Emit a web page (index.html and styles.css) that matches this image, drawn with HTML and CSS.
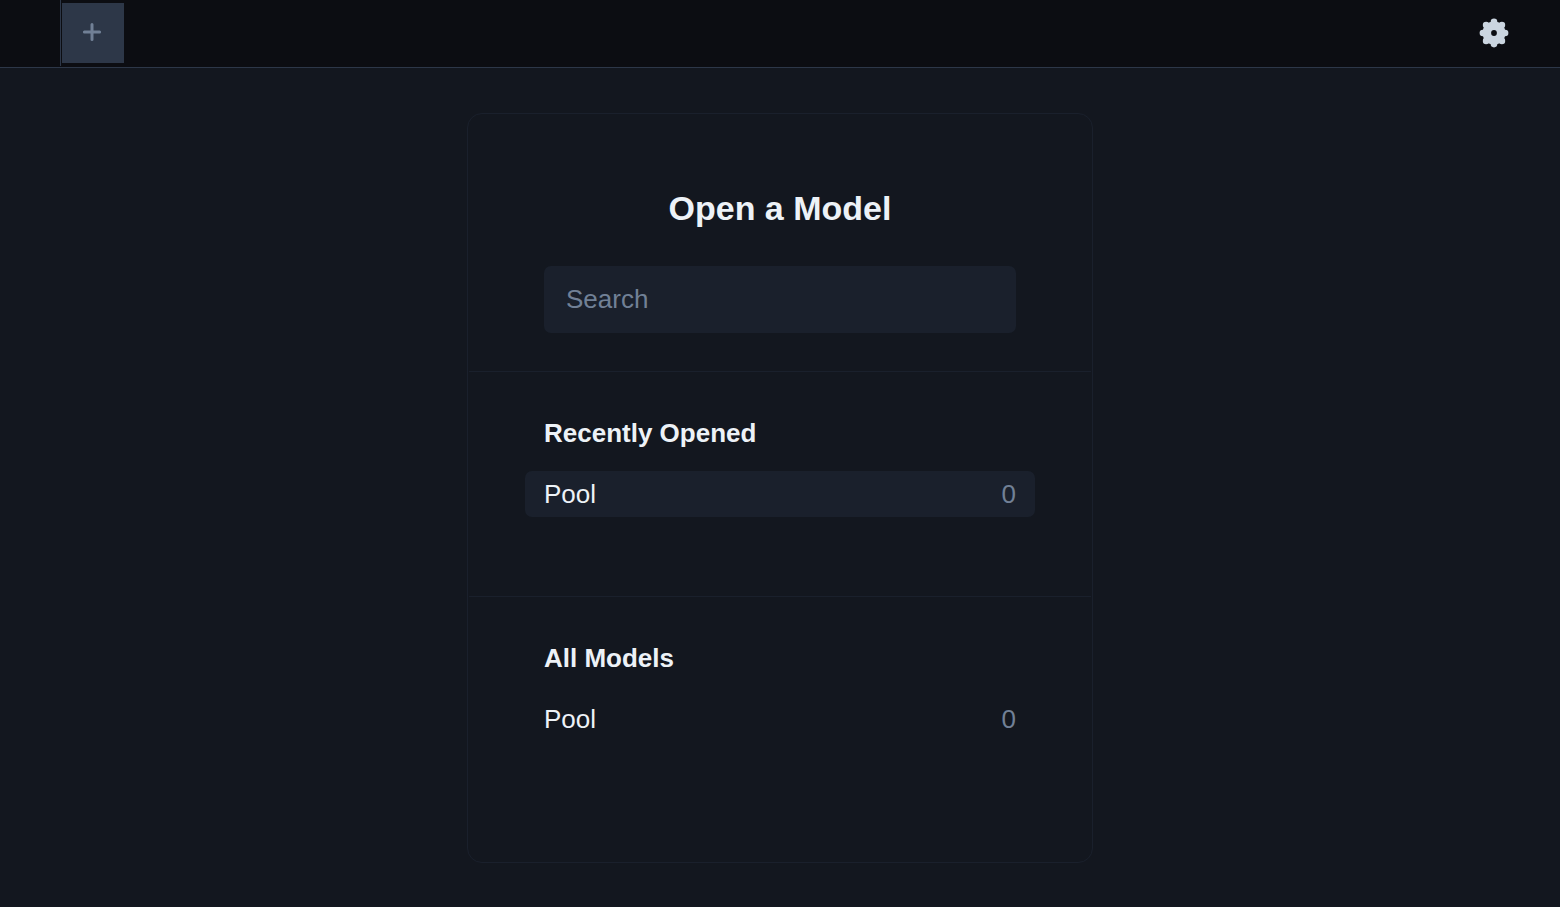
FILE: index.html
```html
<!DOCTYPE html>
<html lang="en">
<head>
<meta charset="utf-8">
<meta name="viewport" content="width=device-width, initial-scale=1">
<title>Open a Model</title>
<link rel="stylesheet" href="styles.css">
</head>
<body>
<header class="topbar">
  <nav class="tabs">
    <button class="new-tab" type="button" aria-label="New tab">
      <svg class="icon-plus" viewBox="0 0 20 20" aria-hidden="true"><path d="M10 2.4v15.2M2.4 10h15.2"/></svg>
    </button>
  </nav>
  <button class="settings" type="button" aria-label="Settings">
    <svg class="icon-gear" viewBox="-16 -16 32 32" aria-hidden="true">
      <g class="gear-body">
        <circle r="11.5"/>
        <circle cx="0" cy="-11.1" r="3.3"/>
        <circle cx="7.9" cy="-7.9" r="3.3"/>
        <circle cx="11.1" cy="0" r="3.3"/>
        <circle cx="7.9" cy="7.9" r="3.3"/>
        <circle cx="0" cy="11.1" r="3.3"/>
        <circle cx="-7.9" cy="7.9" r="3.3"/>
        <circle cx="-11.1" cy="0" r="3.3"/>
        <circle cx="-7.9" cy="-7.9" r="3.3"/>
      </g>
      <circle class="gear-hole" r="2.9"/>
    </svg>
  </button>
</header>
<main class="page">
  <div class="card">
    <section class="section section-search">
      <h1 class="title">Open a Model</h1>
      <input class="search" type="search" placeholder="Search" aria-label="Search">
    </section>
    <section class="section">
      <h2 class="heading">Recently Opened</h2>
      <ul class="models">
        <li><button class="model model-active" type="button"><span>Pool</span><span class="count">0</span></button></li>
      </ul>
    </section>
    <section class="section section-last">
      <h2 class="heading">All Models</h2>
      <ul class="models">
        <li><button class="model" type="button"><span>Pool</span><span class="count">0</span></button></li>
      </ul>
    </section>
  </div>
</main>
</body>
</html>
```
FILE: styles.css
```css
* {
  box-sizing: border-box;
}

body {
  margin: 0;
  background: #13171f;
  color: #edf2f7;
  font: 26px/40px "Liberation Sans", Arial, sans-serif;
}

button,
input {
  border: 0;
  font: inherit;
  color: inherit;
}

.topbar {
  display: flex;
  align-items: stretch;
  justify-content: space-between;
  height: 68px;
  padding: 0 50px 0 60px;
  background: #0c0d12;
  border-bottom: 1px solid #2d3748;
}

.tabs {
  display: flex;
  margin-bottom: 1px;
  padding: 3px 1px;
  border-left: 1px solid #2d3748;
}

.new-tab {
  display: flex;
  align-items: center;
  width: 62px;
  padding: 0 20px;
  background: #2d3748;
}

.icon-plus {
  width: 20px;
  height: 20px;
  margin-bottom: 2px;
  fill: none;
  stroke: #718096;
  stroke-width: 3;
  stroke-linecap: round;
}

.settings {
  display: flex;
  align-items: center;
  padding: 0 0 2px;
  background: transparent;
}

.icon-gear {
  width: 32px;
  height: 32px;
}

.gear-body {
  fill: #cbd5e0;
}

.gear-hole {
  fill: #0c0d12;
}

.page {
  padding: 45px 20px 44px;
}

.card {
  max-width: 626px;
  margin: 0 auto;
  padding: 0 1px;
  border: 1px solid #1a202c;
  border-radius: 15px;
}

.section {
  padding: 41px 75px 79px;
  border-bottom: 1px solid #1a202c;
}

.section-search {
  padding-top: 74px;
  padding-bottom: 38px;
}

.section-last {
  padding-bottom: 120px;
  border-bottom: 0;
}

.title {
  margin: 0 0 38px;
  font-size: 34px;
  line-height: 40px;
  text-align: center;
}

.search {
  display: block;
  width: 100%;
  height: 67px;
  padding: 0 22px;
  background: #1a202c;
  border-radius: 7px;
  appearance: none;
}

.search::placeholder {
  color: #718096;
  opacity: 1;
}

.heading {
  margin: 0 0 18px;
  font-size: 26px;
}

.models {
  margin: 0 -19px;
  padding: 0;
  list-style: none;
}

.model {
  display: flex;
  justify-content: space-between;
  width: 100%;
  padding: 3px 19px;
  background: transparent;
  border-radius: 7px;
}

.model-active {
  background: #1a202c;
}

.count {
  color: #718096;
}
```
